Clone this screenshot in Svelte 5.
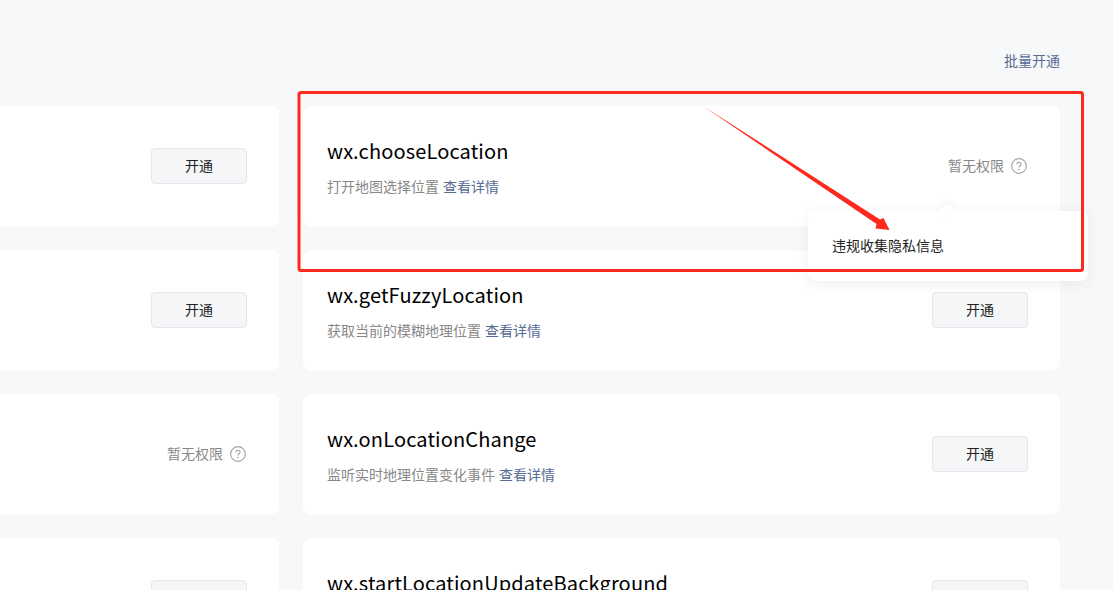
<script>
    const cards = [
        { action: 'open' },
        { name: 'wx.chooseLocation', desc: '打开地图选择位置', action: 'none', tip: '违规收集隐私信息' },
        { action: 'open' },
        { name: 'wx.getFuzzyLocation', desc: '获取当前的模糊地理位置', action: 'open' },
        { action: 'none' },
        { name: 'wx.onLocationChange', desc: '监听实时地理位置变化事件', action: 'open' },
        { action: 'open' },
        { name: 'wx.startLocationUpdateBackground', action: 'open' }
    ];
</script>

<div class="page">
    <div class="head">
        <a class="link" href="#batch">批量开通</a>
    </div>
    <div class="grid">
        {#each cards as card}
            <div class="card">
                <div class="info">
                    {#if card.name}
                        <div class="title">{card.name}</div>
                        <div class="desc">
                            {#if card.desc}
                                {card.desc}<a class="link more" href="#detail">查看详情</a>
                            {/if}
                        </div>
                    {/if}
                </div>
                {#if card.action === 'open'}
                    <button class="btn">开通</button>
                {:else}
                    <div class="denied">
                        <span class="label">暂无权限</span>
                        <svg class="help" width="16" height="16" viewBox="0 0 16 16" fill="none">
                            <circle cx="8" cy="8" r="7.4" stroke="#a3a3a3" stroke-width="1.1" />
                            <path d="M5.9 6.3C5.9 5 6.8 4.2 8 4.2s2.1.8 2.1 1.9c0 1.7-2.1 1.7-2.1 3.4" stroke="#a3a3a3" stroke-width="1.1" />
                            <circle cx="8" cy="11.6" r=".8" fill="#a3a3a3" />
                        </svg>
                        {#if card.tip}
                            <div class="tip">{card.tip}</div>
                        {/if}
                    </div>
                {/if}
            </div>
        {/each}
    </div>

    <!-- red annotation drawn on top of the screenshot -->
    <svg class="mark" width="1113" height="590" viewBox="0 0 1113 590" fill="none">
        <rect x="299" y="92.5" width="783.5" height="178" rx="2" stroke="#ff2a1f" stroke-width="3" />
        <path d="M703 106 L880 219.5 L883.5 218 L889.5 230 L875.5 228.5 L876.5 224 Z" fill="#ff2a1f" />
    </svg>
</div>

<style>
    :global(body) {
        background: #f7f8fa;
    }

    .page {
        position: relative;
        width: 1113px;
        height: 590px;
        overflow: hidden;
        font-family: "Noto Sans CJK SC", "Noto Sans", sans-serif;
    }

    .head {
        display: flex;
        justify-content: flex-end;
        height: 106px;
        padding: 49px 53px 0 0;
        box-sizing: border-box;
        font-size: 14px;
        line-height: 22px;
    }

    .link {
        color: #576b95;
        text-decoration: none;
    }

    .more {
        margin-left: 4px;
    }

    .grid {
        display: grid;
        grid-template-columns: 757px 757px;
        grid-auto-rows: 120px;
        gap: 24px;
        margin-left: -478px;
        width: 1538px;
    }

    .card {
        display: flex;
        align-items: center;
        justify-content: space-between;
        padding: 0 32px 0 24px;
        background: #fff;
        border-radius: 8px;
    }

    .title {
        font-size: 20px;
        line-height: 28px;
        letter-spacing: 0.14px;
        color: #000;
        margin-top: 1px;
        margin-bottom: 10px;
    }

    .desc {
        min-height: 22px;
        font-size: 14px;
        line-height: 22px;
        color: #888;
    }

    .btn {
        width: 96px;
        height: 36px;
        padding: 0 0 2px;
        font: inherit;
        font-size: 14px;
        color: #222;
        background: #f5f6f8;
        border: 1px solid #e4e6ea;
        border-radius: 4px;
    }

    .denied {
        position: relative;
        display: flex;
        align-items: center;
        gap: 7px;
        margin-right: 1px;
        font-size: 14px;
        color: #888;
    }

    .label {
        margin-bottom: 2px;
    }

    .help {
        display: block;
    }

    .tip {
        position: absolute;
        top: 56px;
        left: -140px;
        width: 280px;
        height: 70px;
        padding-left: 24px;
        box-sizing: border-box;
        line-height: 68px;
        color: #222;
        background: #fff;
        border-radius: 8px;
        box-shadow: 0 2px 14px rgba(0, 0, 0, 0.07);
    }

    .tip::before {
        content: "";
        position: absolute;
        top: -6px;
        left: 133px;
        width: 12px;
        height: 12px;
        background: #fff;
        transform: rotate(45deg);
        box-shadow: -2px -2px 5px rgba(0, 0, 0, 0.03);
    }

    .mark {
        position: absolute;
        top: 0;
        left: 0;
        pointer-events: none;
    }
</style>
